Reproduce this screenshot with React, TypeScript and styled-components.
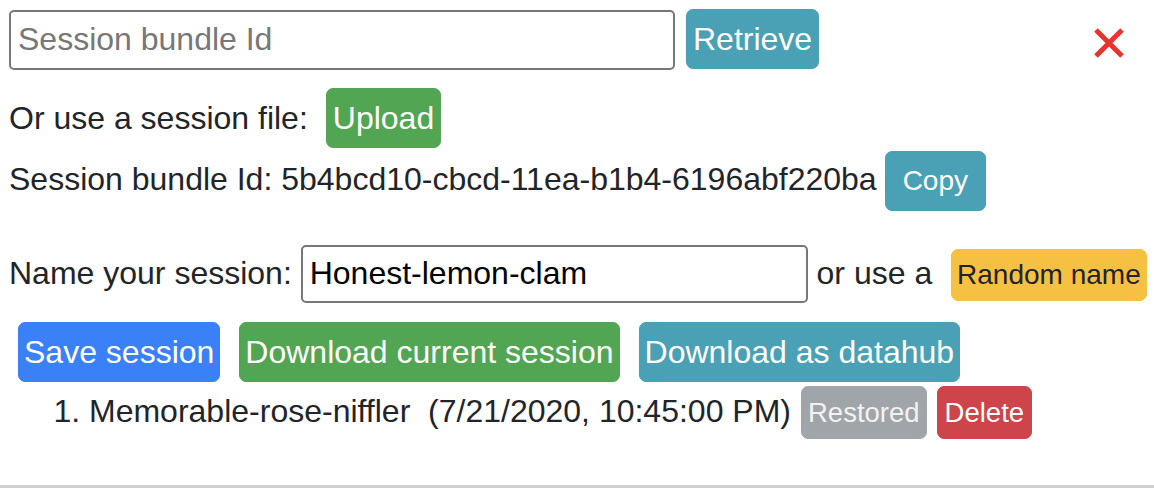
import React, { useState } from "react"
import styled, { createGlobalStyle } from "styled-components"

const GlobalStyle = createGlobalStyle`
  html, body {
    margin: 0;
    padding: 0;
    background: #fff;
  }
  body {
    font-family: "Liberation Sans", Arial, Helvetica, sans-serif;
    font-size: 32px;
    line-height: 48px;
    color: #212529;
  }
`

const colors: Record<string, { bg: string; fg: string }> = {
  primary: { bg: "#3a80f6", fg: "#fff" },
  success: { bg: "#52a552", fg: "#fff" },
  info: { bg: "#4aa0b5", fg: "#fff" },
  warning: { bg: "#f6c143", fg: "#212529" },
  danger: { bg: "#cd444b", fg: "#fff" },
  secondary: { bg: "#a0a5a9", fg: "#f2f2f2" },
}

const Panel = styled.div`
  box-sizing: border-box;
  height: 488px;
  padding: 9px 0 0 9px;
  border-bottom: 3px solid #d0d0d0;
  display: flex;
  flex-direction: column;
`

const Row = styled.div<{ $top?: number; $gap?: number; $indent?: number }>`
  display: flex;
  align-items: baseline;
  gap: ${p => p.$gap ?? 0}px;
  margin-top: ${p => p.$top ?? 0}px;
  padding-left: ${p => p.$indent ?? 0}px;
`

const Label = styled.span`
  white-space: pre;
`

const TextInput = styled.input<{ $width: number; $height: number }>`
  box-sizing: border-box;
  width: ${p => p.$width}px;
  height: ${p => p.$height}px;
  padding: 0 7px;
  border: 2px solid #777;
  border-radius: 5px;
  font-family: inherit;
  font-size: 32px;
  color: #000;
  outline: none;

  &::placeholder {
    color: #777;
  }
`

const Button = styled.button<{ $variant: string; $small?: boolean; $padX?: number; $padY?: number }>`
  box-sizing: border-box;
  border: 1px solid ${p => colors[p.$variant].bg};
  background: ${p => colors[p.$variant].bg};
  color: ${p => colors[p.$variant].fg};
  border-radius: 7px;
  font-family: inherit;
  font-size: ${p => (p.$small ? 28 : 32)}px;
  line-height: ${p => (p.$small ? 42 : 48)}px;
  padding: ${p => p.$padY ?? 5}px ${p => p.$padX ?? 5}px;
  cursor: pointer;
  white-space: nowrap;
`

const CloseButton = styled.button`
  margin-left: auto;
  margin-right: 29px;
  align-self: flex-start;
  margin-top: 18px;
  width: 32px;
  height: 32px;
  padding: 0;
  border: none;
  background: none;
  cursor: pointer;
  display: flex;
`

const SessionList = styled.ol`
  margin: 4px 0 0;
  padding-left: 80px;
`

const SessionItem = styled.li`
  ${Button} {
    margin-left: 10px;
    font-size: 27.5px;
    line-height: 41px;
  }
`

const App = () => {
  const [bundleId, setBundleId] = useState("")
  const [name, setName] = useState("Honest-lemon-clam")

  return (
    <>
      <GlobalStyle />
      <Panel>
        <Row $gap={11}>
          <TextInput
            $width={666}
            $height={60}
            placeholder="Session bundle Id"
            value={bundleId}
            onChange={e => setBundleId(e.target.value)}
          />
          <Button $variant="info" $padX={6}>Retrieve</Button>
          <CloseButton aria-label="Close">
            <svg width="32" height="32" viewBox="0 0 32 32">
              <path d="M3 3 L29 29 M29 3 L3 29" stroke="#e8342a" strokeWidth="5" />
            </svg>
          </CloseButton>
        </Row>

        <Row $top={18} $gap={18}>
          <Label>Or use a session file:</Label>
          <Button $variant="success" $padX={6}>Upload</Button>
        </Row>

        <Row $top={3} $gap={8}>
          <Label>Session bundle Id: 5b4bcd10-cbcd-11ea-b1b4-6196abf220ba</Label>
          <Button $variant="info" $small $padX={17} $padY={8}>Copy</Button>
        </Row>

        <Row $top={34}>
          <Label>Name your session: </Label>
          <TextInput
            $width={507}
            $height={58}
            value={name}
            onChange={e => setName(e.target.value)}
          />
          <Label> or use a </Label>
          <Button $variant="warning" $small $padY={4} style={{ marginLeft: 10 }}>
            Random name
          </Button>
        </Row>

        <Row $top={19} $gap={19} $indent={9}>
          <Button $variant="primary">Save session</Button>
          <Button $variant="success">Download current session</Button>
          <Button $variant="info">Download as datahub</Button>
        </Row>

        <SessionList>
          <SessionItem>
            Memorable-rose-niffler{"\u00a0 "}(7/21/2020, 10:45:00 PM)
            <Button $variant="secondary" $small $padX={6}>Restored</Button>
            <Button $variant="danger" $small $padX={7}>Delete</Button>
          </SessionItem>
        </SessionList>
      </Panel>
    </>
  )
}

export default App
